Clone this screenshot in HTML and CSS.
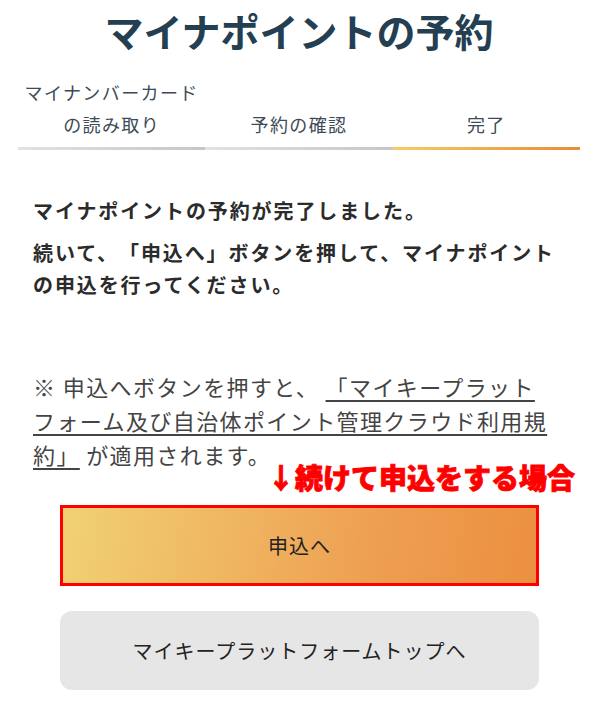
FILE: index.html
```html
<!DOCTYPE html>
<html>

<head>
    <meta name="viewport" content="width=device-width, initial-scale=1.0">
    <link rel="stylesheet" href="styles.css">
</head>

<body>
    <div class="page">
        <h1 class="title">マイナポイントの予約</h1>

        <div class="steps">
            <div class="step">
                <div class="step-label">マイナンバーカード<br>の読み取り</div>
                <div class="step-bar"></div>
            </div>
            <div class="step">
                <div class="step-label">予約の確認</div>
                <div class="step-bar"></div>
            </div>
            <div class="step current">
                <div class="step-label">完了</div>
                <div class="step-bar"></div>
            </div>
        </div>

        <div class="message">
            <p class="done">マイナポイントの予約が完了しました。</p>
            <p class="next">続いて、「申込へ」ボタンを押して、マイナポイント<br>の申込を行ってください。</p>
        </div>

        <p class="note">※ 申込へボタンを押すと、 <a href="#" class="terms">「マイキープラット<br>フォーム及び自治体ポイント管理クラウド利用規<br>約」</a> が適用されます。</p>

        <div class="hint">↓続けて申込をする場合</div>

        <div class="buttons">
            <button class="btn btn-apply">申込へ</button>
            <button class="btn btn-top">マイキープラットフォームトップへ</button>
        </div>
    </div>
</body>

</html>
```

FILE: styles.css
```css
body {
    margin: 0;
    background-color: #fff;
    font-family: "Noto Sans CJK JP", "Noto Sans", sans-serif;
    text-spacing-trim: space-all;
}

.page {
    padding: 0 20px 0 18px;
}

.title {
    margin: 0;
    font-size: 39px;
    line-height: 60px;
    font-weight: 700;
    text-align: center;
    color: #253f52;
}

.steps {
    display: grid;
    grid-template-columns: 1fr 1fr 1fr;
    margin-top: 16px;
}

.step {
    display: flex;
    flex-direction: column;
    justify-content: flex-end;
}

.step-label {
    font-size: 18px;
    line-height: 32px;
    letter-spacing: 1.4px;
    text-align: center;
    color: #3c4b57;
}

.step-bar {
    height: 3px;
    margin-top: 7px;
    background: linear-gradient(to right, #e2e2e2, #c6c6c6);
}

.current .step-bar {
    background: linear-gradient(to right, #f4cd68, #ec8a36);
}

.message {
    padding-left: 15px;
    margin-top: 45px;
    color: #2b2b2b;
}

.message p {
    margin: 0;
    font-size: 20px;
    line-height: 32px;
    font-weight: 700;
    letter-spacing: 1.9px;
}

.message .next {
    margin-top: 10px;
}

.note {
    margin: 68px 0 0 0;
    padding-left: 15px;
    font-size: 22px;
    line-height: 34px;
    letter-spacing: 1.4px;
    color: #444;
    white-space: nowrap;
}

.terms {
    color: #444;
    text-decoration: underline;
    text-underline-offset: 4px;
}

.hint {
    margin-top: -9px;
    padding-right: 5px;
    text-align: right;
    font-size: 28px;
    line-height: 30px;
    font-weight: 900;
    color: #f00;
    -webkit-text-stroke: 0.8px #f00;
}

.buttons {
    display: flex;
    flex-direction: column;
    gap: 25px;
    margin: 13px 41px 0 42px;
}

.btn {
    font-family: inherit;
    font-size: 20px;
    letter-spacing: 1px;
    color: #222;
    cursor: pointer;
}

.btn-apply {
    height: 81px;
    border: 3px solid #f00;
    border-radius: 0;
    background: linear-gradient(100deg, #f1d174, #ee9f52 65%, #ec8f40);
}

.btn-top {
    height: 79px;
    border: none;
    border-radius: 12px;
    background-color: #e6e6e6;
}
```
